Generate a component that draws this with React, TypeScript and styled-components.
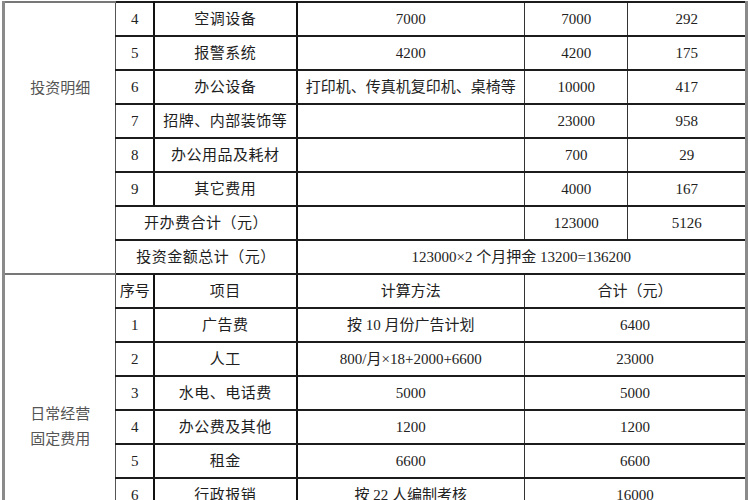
import React from "react";
import styled, { createGlobalStyle } from "styled-components";

const GlobalStyle = createGlobalStyle`
  html, body {
    margin: 0;
    padding: 0;
    background: #fff;
    width: 750px;
    height: 500px;
    overflow: hidden;
  }
  body {
    font-family: "Liberation Serif", "Noto Sans CJK SC", serif;
    color: #222;
  }
`;

const Page = styled.div`
  width: 750px;
  height: 500px;
  overflow: hidden;
  padding: 1px 0 0 2px;
  box-sizing: border-box;
`;

const Table = styled.table`
  width: 746px;
  border-collapse: collapse;
  table-layout: fixed;
  border-left: 3px solid #8a8a8a;
  border-right: 3px solid #8a8a8a;
  font-size: 15px;
`;

const Row = styled.tr`
  height: 34px;
`;

const Cell = styled.td`
  border-top: 2px solid #1c1c1c;
  border-bottom: 2px solid #1c1c1c;
  border-left: 1px solid #333;
  border-right: 1px solid #333;
  text-align: center;
  padding: 0 4px;
  white-space: nowrap;
  overflow: hidden;
  vertical-align: middle;
  line-height: 1;
`;

const Seq = styled(Cell)`
  padding: 0;
  border-left: 1.5px solid #444;
  border-right: 2px solid #111;
`;

const Item = styled(Cell)`
  border-right: 2px solid #111;
  color: #1e1e1e;
  letter-spacing: 0.5px;
`;

const SectionLabel = styled.td<{ $shiftUp?: number; $shiftDown?: number }>`
  border-top: 2px solid #777;
  border-bottom: 2px solid #777;
  border-right: 1.5px solid #555;
  text-align: center;
  vertical-align: middle;
  color: #555;
  font-size: 15px;
  line-height: 25px;
  padding: ${(p) => `${p.$shiftDown ?? 0}px 0 ${p.$shiftUp ?? 0}px`};
`;

type InvestRow = { no: number; name: string; desc: string; amount: string; month: string };

const investRows: InvestRow[] = [
  { no: 4, name: "空调设备", desc: "7000", amount: "7000", month: "292" },
  { no: 5, name: "报警系统", desc: "4200", amount: "4200", month: "175" },
  { no: 6, name: "办公设备", desc: "打印机、传真机复印机、桌椅等", amount: "10000", month: "417" },
  { no: 7, name: "招牌、内部装饰等", desc: "", amount: "23000", month: "958" },
  { no: 8, name: "办公用品及耗材", desc: "", amount: "700", month: "29" },
  { no: 9, name: "其它费用", desc: "", amount: "4000", month: "167" },
];

type CostRow = { no: number; name: string; method: string; total: string };

const costRows: CostRow[] = [
  { no: 1, name: "广告费", method: "按 10 月份广告计划", total: "6400" },
  { no: 2, name: "人工", method: "800/月×18+2000+6600", total: "23000" },
  { no: 3, name: "水电、电话费", method: "5000", total: "5000" },
  { no: 4, name: "办公费及其他", method: "1200", total: "1200" },
  { no: 5, name: "租金", method: "6600", total: "6600" },
  { no: 6, name: "行政报销", method: "按 22 人编制考核", total: "16000" },
];

export default function App() {
  return (
    <>
      <GlobalStyle />
      <Page>
        <Table>
          <colgroup>
            <col style={{ width: 112 }} />
            <col style={{ width: 38 }} />
            <col style={{ width: 142 }} />
            <col style={{ width: 227 }} />
            <col style={{ width: 103 }} />
            <col style={{ width: 118 }} />
          </colgroup>
          <tbody>
            {investRows.map((r, i) => (
              <Row key={r.no}>
                {i === 0 && (
                  <SectionLabel rowSpan={8} $shiftUp={100}>
                    投资明细
                  </SectionLabel>
                )}
                <Seq>{r.no}</Seq>
                <Item>{r.name}</Item>
                <Cell>{r.desc}</Cell>
                <Cell>{r.amount}</Cell>
                <Cell>{r.month}</Cell>
              </Row>
            ))}
            <Row>
              <Item colSpan={2}>开办费合计（元）</Item>
              <Cell />
              <Cell>123000</Cell>
              <Cell>5126</Cell>
            </Row>
            <Row>
              <Item colSpan={2}>投资金额总计（元）</Item>
              <Cell colSpan={3}>123000×2 个月押金 13200=136200</Cell>
            </Row>
            <Row>
              <SectionLabel rowSpan={7} $shiftDown={68}>
                日常经营
                <br />
                固定费用
              </SectionLabel>
              <Seq>序号</Seq>
              <Item>项目</Item>
              <Cell>计算方法</Cell>
              <Cell colSpan={2}>合计（元）</Cell>
            </Row>
            {costRows.map((r) => (
              <Row key={r.no}>
                <Seq>{r.no}</Seq>
                <Item>{r.name}</Item>
                <Cell>{r.method}</Cell>
                <Cell colSpan={2}>{r.total}</Cell>
              </Row>
            ))}
          </tbody>
        </Table>
      </Page>
    </>
  );
}
